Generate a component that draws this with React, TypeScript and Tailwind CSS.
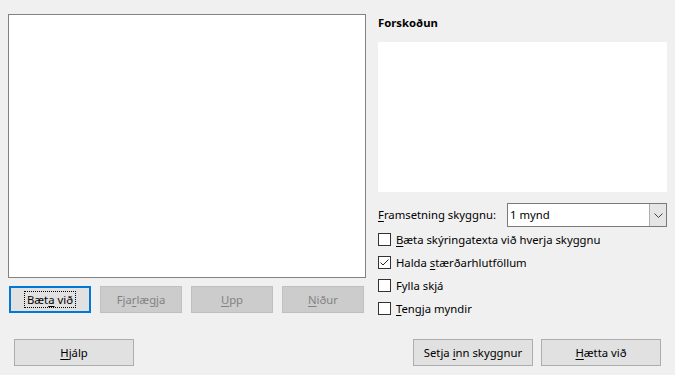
import React from "react";

const U = ({ children }: { children: React.ReactNode }) => (
  <span className="underline underline-offset-[2px] decoration-[1px]">{children}</span>
);

function Btn({
  children,
  disabled,
  focused,
  className = "",
}: {
  children: React.ReactNode;
  disabled?: boolean;
  focused?: boolean;
  className?: string;
}) {
  if (focused) {
    return (
      <div
        className={`h-[27px] border-2 border-[#0078d7] bg-[#e1e1e1] flex items-center justify-center text-black ${className}`}
      >
        <span className="border border-dotted border-black px-[2px] leading-[15px]">{children}</span>
      </div>
    );
  }
  return (
    <div
      className={`h-[27px] border flex items-center justify-center ${
        disabled
          ? "border-[#bfbfbf] bg-[#cccccc] text-[#838383]"
          : "border-[#adadad] bg-[#e1e1e1] text-black"
      } ${className}`}
    >
      <span>{children}</span>
    </div>
  );
}

function Check({ checked, children }: { checked?: boolean; children: React.ReactNode }) {
  return (
    <div className="h-[23px] flex items-center gap-[5px]">
      <div className="w-[13px] h-[13px] border border-[#333333] bg-white relative shrink-0">
        {checked && (
          <svg width="11" height="11" viewBox="0 0 11 11" className="absolute left-0 top-0">
            <path d="M1.5 5.5 L4 8 L9.5 2.5" fill="none" stroke="#222" strokeWidth="1" />
          </svg>
        )}
      </div>
      <span>{children}</span>
    </div>
  );
}

export default function App() {
  return (
    <div
      className="w-[675px] h-[375px] bg-[#f0f0f0] text-[11.3px] leading-[16px] text-black overflow-hidden"
      style={{ fontFamily: '"Noto Sans", "Open Sans", sans-serif' }}
    >
      <div className="flex pt-[14px] pl-[8px] gap-[12px]">
        {/* left column */}
        <div className="w-[358px] flex flex-col shrink-0">
          <div className="h-[264px] border border-[#828282] bg-white" />
          <div className="flex gap-[9px] mt-[8px] pl-[1px]">
            <Btn focused className="w-[82px]">
              Bæt<U>a</U> við
            </Btn>
            <Btn disabled className="w-[82px]">
              Fja<U>r</U>lægja
            </Btn>
            <Btn disabled className="w-[82px]">
              <U>U</U>pp
            </Btn>
            <Btn disabled className="w-[82px]">
              <U>N</U>iður
            </Btn>
          </div>
        </div>
        {/* right column */}
        <div className="w-[289px] flex flex-col shrink-0">
          <div className="mt-[1px] h-[16px] font-bold">Forskoðun</div>
          <div className="mt-[11px] h-[150px] bg-white" />
          <div className="mt-[11px] h-[24px] flex items-center">
            <span className="w-[129px] shrink-0">
              <U>F</U>ramsetning skyggnu:
            </span>
            <div className="flex-1 h-[24px] border border-[#7a7a7a] bg-white flex items-center">
              <span className="flex-1 pl-[2px]">1 mynd</span>
              <div className="w-[17px] h-[22px] bg-[#e5e5e5] border-l border-[#adadad] flex items-center justify-center">
                <svg width="9" height="5" viewBox="0 0 9 5">
                  <path d="M0.5 0.5 L4.5 4.5 L8.5 0.5" fill="none" stroke="#444" strokeWidth="1" />
                </svg>
              </div>
            </div>
          </div>
          <div className="mt-[1px] flex flex-col">
            <Check>
              <U>B</U>æta skýringatexta við hverja skyggnu
            </Check>
            <Check checked>
              Halda <U>s</U>tærðarhlutföllum
            </Check>
            <Check>
              Fylla sk<U>j</U>á
            </Check>
            <Check>
              <U>T</U>engja myndir
            </Check>
          </div>
        </div>
      </div>
      <div className="flex mt-[19px] pl-[14px] pr-[14px]">
        <Btn className="w-[120px]">
          <U>H</U>jálp
        </Btn>
        <div className="flex-1" />
        <Btn className="w-[120px]">
          Setja <U>i</U>nn skyggnur
        </Btn>
        <Btn className="w-[120px] ml-[8px]">
          <U>H</U>ætta við
        </Btn>
      </div>
    </div>
  );
}
